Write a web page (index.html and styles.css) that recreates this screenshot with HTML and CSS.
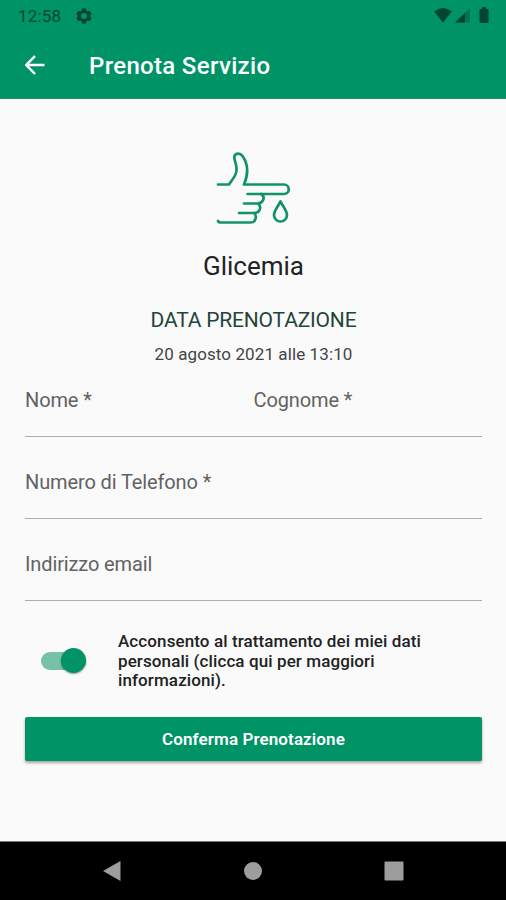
FILE: index.html
```html
<!DOCTYPE html>
<html lang="it">
<head>
  <meta charset="UTF-8">
  <title>Prenota Servizio</title>
  <link rel="stylesheet" href="styles.css">
</head>
<body>

<div class="screen">
  <header class="header">
    <div class="status">
      <span class="clock">12:58</span>
      <svg class="gear" viewBox="0 0 24 24" width="18" height="18"><path fill="currentColor" fill-rule="evenodd" d="M9.3 2h5.4l.5 3 1.7 1 2.8-1.1 2.7 4.6L20 11.400v1.200l2.400 1.900-2.700 4.600-2.800-1.100-1.700 1-.5 3H9.300l-.5-3-1.700-1-2.800 1.100-2.700-4.600L4 12.600v-1.200L1.600 9.500l2.700-4.600L7.100 6l1.700-1zM12 8a4 4 0 1 0 0 8 4 4 0 0 0 0-8z"/></svg>
      <span class="spacer"></span>
      <svg class="indicators" viewBox="0 0 56 18" width="56" height="18">
        <path fill="currentColor" d="M0 4.500Q9-2.500 18 4.500L9 15.500z"/>
        <path fill="currentColor" opacity=".4" d="M21 15.500L36 1v14.500z"/>
        <path fill="currentColor" d="M21 15.500L31 6v9.500z"/>
        <path fill="currentColor" d="M46 2h2V0h4v2h2.500v14h-9V2z"/>
      </svg>
    </div>
    <div class="appbar">
      <svg class="back" viewBox="0 0 20 20" width="20" height="20"><path d="M19.500 10H1.800M10 1L1.300 10l8.700 9"/></svg>
      <h1>Prenota Servizio</h1>
    </div>
  </header>

  <main class="content">
    <svg class="hand" viewBox="0 0 76 74" width="76" height="74">
      <path d="M2 33.500h11C19 25 21 22.500 20.500 17C20 11 17.500 8 18.500 5C19.500 2 24 1.500 26.500 5C33 14 32 24 28 33.500h40a4.750 4.750 0 0 1 0 9.500H31.500"/>
      <path d="M45 43C50 46 47 52 42 52.500H28M42 52.500C46 56 44 62 38 62H23M38 62C41.500 65 39.500 71.500 35 71.500H5Q2.500 71.500 2 70"/>
      <path d="M64.500 50.500C61 57 58 60 58 64a6.500 6.500 0 0 0 13 0c0-4-3-7-6.500-13.500z"/>
    </svg>
    <h2>Glicemia</h2>
    <h3>DATA PRENOTAZIONE</h3>
    <p class="date">20 agosto 2021 alle 13:10</p>

    <form class="form">
      <div class="field row">
        <label>Nome *</label>
        <label>Cognome *</label>
      </div>
      <div class="field">
        <label>Numero di Telefono *</label>
      </div>
      <div class="field">
        <label>Indirizzo email</label>
      </div>
      <div class="consent">
        <div class="switch"><span class="thumb"></span></div>
        <p>Acconsento al trattamento dei miei dati<br>personali (clicca qui per maggiori<br>informazioni).</p>
      </div>
      <button type="button" class="confirm">Conferma Prenotazione</button>
    </form>
  </main>

  <nav class="navbar">
    <svg viewBox="0 0 20 22" width="20" height="22"><path d="M1 11L18.500 1v20z"/></svg>
    <svg viewBox="0 0 20 22" width="20" height="22"><circle cx="10" cy="11" r="9"/></svg>
    <svg viewBox="0 0 20 22" width="20" height="22"><rect x=".5" y="1.500" width="19" height="19" rx="1"/></svg>
  </nav>
</div>

</body>
</html>
```

FILE: styles.css
```css
* {
  box-sizing: border-box;
}
body {
  margin: 0;
  font-family: Roboto, sans-serif;
  background: #fafafa;
  color: #222;
}
h1, h2, h3, p {
  margin: 0;
}
.screen {
  width: 506px;
  height: 900px;
  display: flex;
  flex-direction: column;
  overflow: hidden;
}
.header {
  height: 99px;
  background: #009366;
  border-bottom: 1px solid #2a8f69;
}
.status {
  height: 32px;
  padding: 0 16px 0 18px;
  display: flex;
  align-items: center;
  color: #004631;
}
.clock {
  width: 57px;
  font-size: 17px;
  letter-spacing: 0.2px;
}
.spacer {
  flex: 1;
}
.appbar {
  height: 66px;
  padding-left: 25px;
  display: flex;
  align-items: center;
  gap: 44px;
  color: #fff;
}
.back {
  fill: none;
  stroke: #fff;
  stroke-width: 2.5;
}
h1 {
  padding-top: 1px;
  font-size: 24px;
  font-weight: 500;
  letter-spacing: 0.32px;
}
.content {
  flex: 1;
  padding: 52px 24px 0 25px;
  display: flex;
  flex-direction: column;
  align-items: center;
}
.hand {
  fill: none;
  stroke: #109467;
  stroke-width: 2.7;
  stroke-linecap: round;
  stroke-linejoin: round;
}
h2 {
  margin-top: 25px;
  font-size: 26px;
  line-height: 32px;
  font-weight: 400;
}
h3 {
  margin-top: 25px;
  font-size: 21px;
  line-height: 26px;
  font-weight: 400;
  letter-spacing: -0.18px;
  color: #24443a;
}
.date {
  margin-top: 10px;
  font-size: 17px;
  line-height: 22px;
  letter-spacing: 0.1px;
  color: #444;
}
.form {
  width: 100%;
  margin-top: 23px;
}
.field {
  height: 49px;
  margin-bottom: 33px;
  border-bottom: 1px solid #adadad;
  line-height: 25px;
  font-size: 20px;
  letter-spacing: -0.12px;
  color: #626262;
}
.row {
  display: grid;
  grid-template-columns: 1fr 1fr;
}
.consent {
  margin-top: -3px;
  display: flex;
  align-items: center;
  gap: 32px;
}
.consent p {
  padding-top: 1px;
  font-size: 17px;
  line-height: 19.5px;
  font-weight: 500;
  letter-spacing: 0.1px;
}
.switch {
  width: 45px;
  height: 18px;
  margin-left: 16px;
  border-radius: 9px;
  background: #76c2a6;
  display: flex;
  align-items: center;
  justify-content: flex-end;
}
.thumb {
  width: 25px;
  height: 25px;
  flex: none;
  border-radius: 50%;
  background: #009366;
  box-shadow: 0 1px 2px rgba(0, 0, 0, 0.4);
}
.confirm {
  width: 100%;
  height: 44px;
  margin-top: 26px;
  padding: 0;
  border: none;
  border-radius: 2px;
  background: #009366;
  box-shadow: 0 2px 3px rgba(0, 0, 0, 0.35);
  color: #fff;
  font-family: inherit;
  font-size: 17px;
  font-weight: 600;
  letter-spacing: 0.1px;
}
.navbar {
  height: 59px;
  padding: 0 102px;
  border-top: 1px solid #777;
  background: #000;
  display: flex;
  align-items: center;
  justify-content: space-between;
}
.navbar svg {
  fill: #9d9d9d;
}
```
